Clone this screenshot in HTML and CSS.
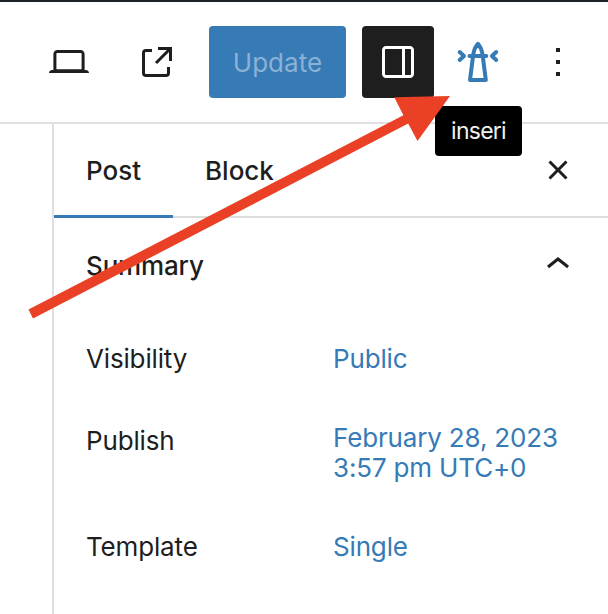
FILE: index.html
```html
<!DOCTYPE html>
<html lang="en">
<head>
<meta charset="utf-8">
<title>Post editor</title>
<link rel="stylesheet" href="styles.css">
</head>
<body>
<div class="editor">
  <header class="toolbar">
    <button class="icon-button" aria-label="Preview">
      <svg class="icon" viewBox="0 0 24 24"><path d="M20.5 16h-.7V8c0-1.1-.9-2-2-2H6.2c-1.1 0-2 .9-2 2v8h-.7c-.8 0-1.5.7-1.5 1.5h20c0-.8-.7-1.5-1.5-1.5zM5.7 8c0-.3.2-.5.5-.5h11.6c.3 0 .5.2.5.5v7.6H5.7V8z"/></svg>
    </button>
    <button class="icon-button" aria-label="View post">
      <svg class="icon" viewBox="0 0 24 24"><path d="M19.5 4.5h-7V6h4.44l-5.97 5.97 1.06 1.06L18 7.06v4.44h1.5v-7Zm-13 1a2 2 0 0 0-2 2v10a2 2 0 0 0 2 2h10a2 2 0 0 0 2-2v-3H17v3a.5.5 0 0 1-.5.5h-10a.5.5 0 0 1-.5-.5v-10a.5.5 0 0 1 .5-.5h3V5.5h-3Z"/></svg>
    </button>
    <button class="update"><span class="update-label">Update</span></button>
    <div class="button-group">
      <button class="icon-button pressed" aria-label="Settings">
        <svg class="icon" viewBox="0 0 24 24"><path fill-rule="evenodd" d="M18 4H6c-1.1 0-2 .9-2 2v12c0 1.1.9 2 2 2h12c1.1 0 2-.9 2-2V6c0-1.1-.9-2-2-2zm-4 14.5H6c-.3 0-.5-.2-.5-.5V6c0-.3.2-.5.5-.5h8v13zm4.5-.5c0 .3-.2.5-.5.5h-2.5v-13H18c.3 0 .5.2.5.5v12z"/></svg>
      </button>
      <div class="tooltip-anchor">
        <button class="icon-button" aria-label="inseri">
          <svg class="icon lighthouse" viewBox="0 0 48 48"><path d="M5.700 14l4.300 4-4.300 4M42.200 14l-4.300 4 4.300 4M15.500 18h16.800M19.300 17.500c.2-5 1.700-8.500 4.600-11.700 2.900 3.200 4.400 6.700 4.600 11.700M19 18.500l-3 23.500h15.800l-3-23.500"/></svg>
        </button>
        <div class="tooltip"><span class="tooltip-label">inseri</span></div>
      </div>
      <button class="icon-button" aria-label="Options">
        <svg class="icon" viewBox="0 0 24 24"><path d="M13 19h-2v-2h2v2zm0-6h-2v-2h2v2zm0-6h-2V5h2v2z"/></svg>
      </button>
    </div>
  </header>
  <aside class="sidebar">
    <nav class="tabs">
      <button class="tab active"><span class="post-label">Post</span></button>
      <button class="tab"><span class="block-label">Block</span></button>
      <svg class="icon close" viewBox="0 0 24 24"><path d="M12 13.06l3.712 3.713 1.061-1.06L13.061 12l3.712-3.712-1.06-1.06L12 10.938 8.288 7.227l-1.061 1.06L10.939 12l-3.712 3.712 1.06 1.061L12 13.061z"/></svg>
    </nav>
    <section class="panel">
      <div class="panel-head">
        <h2 class="panel-title">Summary</h2>
        <svg class="icon" viewBox="0 0 24 24"><path d="M6.500 12.400L12 8l5.500 4.400-.9 1.200L12 10l-4.500 3.600-1-1.200z"/></svg>
      </div>
      <div class="row"><span class="label">Visibility</span><a class="value">Public</a></div>
      <div class="row publish"><span class="label">Publish</span><a class="value">February 28, 2023<br>3:57 pm UTC+0</a></div>
      <div class="row"><span class="label">Template</span><a class="value">Single</a></div>
    </section>
  </aside>
  <svg class="arrow" viewBox="0 0 608 614"><path d="M28.500 309.600L403.400 115.200 394.300 97.300 450 96 417.500 141 408.200 123.600 33 318.600z"/></svg>
</div>
</body>
</html>
```

FILE: styles.css
```css
* { box-sizing: border-box; }

body {
  margin: 0;
  background: #fff;
  color: #1e1e1e;
  font: 400 26px/30px Inter, "Liberation Sans", sans-serif;
  letter-spacing: -0.16px;
}

button {
  padding: 0;
  border: 0;
  background: none;
  color: inherit;
  font: inherit;
  letter-spacing: 0;
}

.editor {
  position: relative;
  display: flex;
  flex-direction: column;
  width: 608px;
  height: 614px;
  overflow: hidden;
  border-top: 2px solid #1d2327;
}

.toolbar {
  display: flex;
  flex: none;
  align-items: center;
  gap: 16px;
  height: 122px;
  padding-left: 33px;
  border-bottom: 2px solid #e0e0e0;
}

.icon {
  display: block;
  flex: none;
  width: 48px;
  height: 48px;
  fill: currentColor;
}

.icon-button {
  display: flex;
  align-items: center;
  justify-content: center;
  width: 72px;
  height: 72px;
  border-radius: 4px;
}

.pressed {
  background: #1e1e1e;
  color: #fff;
}

.update {
  width: 137px;
  height: 72px;
  padding-top: 2px;
  border-radius: 4px;
  background: #367ab6;
  color: #8bb1d5;
}

.update-label { letter-spacing: 0.05px; }

.button-group {
  display: flex;
  gap: 8px;
}

.tooltip-anchor { position: relative; }

.lighthouse {
  fill: none;
  stroke: #367ab6;
  stroke-width: 4;
  stroke-linecap: round;
  stroke-linejoin: round;
}

.tooltip {
  position: absolute;
  top: 80px;
  left: -7px;
  width: 87px;
  height: 50px;
  border-radius: 4px;
  background: #000;
  color: #f0f0f0;
  font-size: 23px;
  letter-spacing: -0.75px;
  line-height: 51px;
  text-align: center;
}

.sidebar {
  flex: 1;
  margin-left: 52px;
  border-left: 2px solid #e0e0e0;
}

.tabs {
  display: flex;
  align-items: center;
  height: 94px;
  padding-right: 26px;
  border-bottom: 2px solid #ddd;
}

.tab {
  height: 94px;
  padding: 2px 32px 0;
  font-weight: 500;
}

.tab.active {
  width: 119px;
  margin-bottom: -2px;
  padding-top: 0;
  box-shadow: inset 0 -3px #367ab6;
}

.close { margin-left: auto; }

.panel-head {
  display: flex;
  align-items: center;
  justify-content: space-between;
  height: 94px;
  padding: 0 26px 0 32px;
}

.panel-title {
  margin: 0;
  padding-top: 2px;
  font: inherit;
  font-weight: 500;
}

.row {
  display: grid;
  grid-template-columns: 247px 1fr;
  margin: 32px 0 0 32px;
}

.publish {
  align-items: start;
  margin-top: 49px;
}

.publish + .row { margin-top: 49px; }

.publish .label { padding-top: 3px; }

.value { color: #367ab6; }

.arrow {
  position: absolute;
  top: -2px;
  left: 0;
  width: 608px;
  height: 614px;
  fill: #ea4025;
}
```
